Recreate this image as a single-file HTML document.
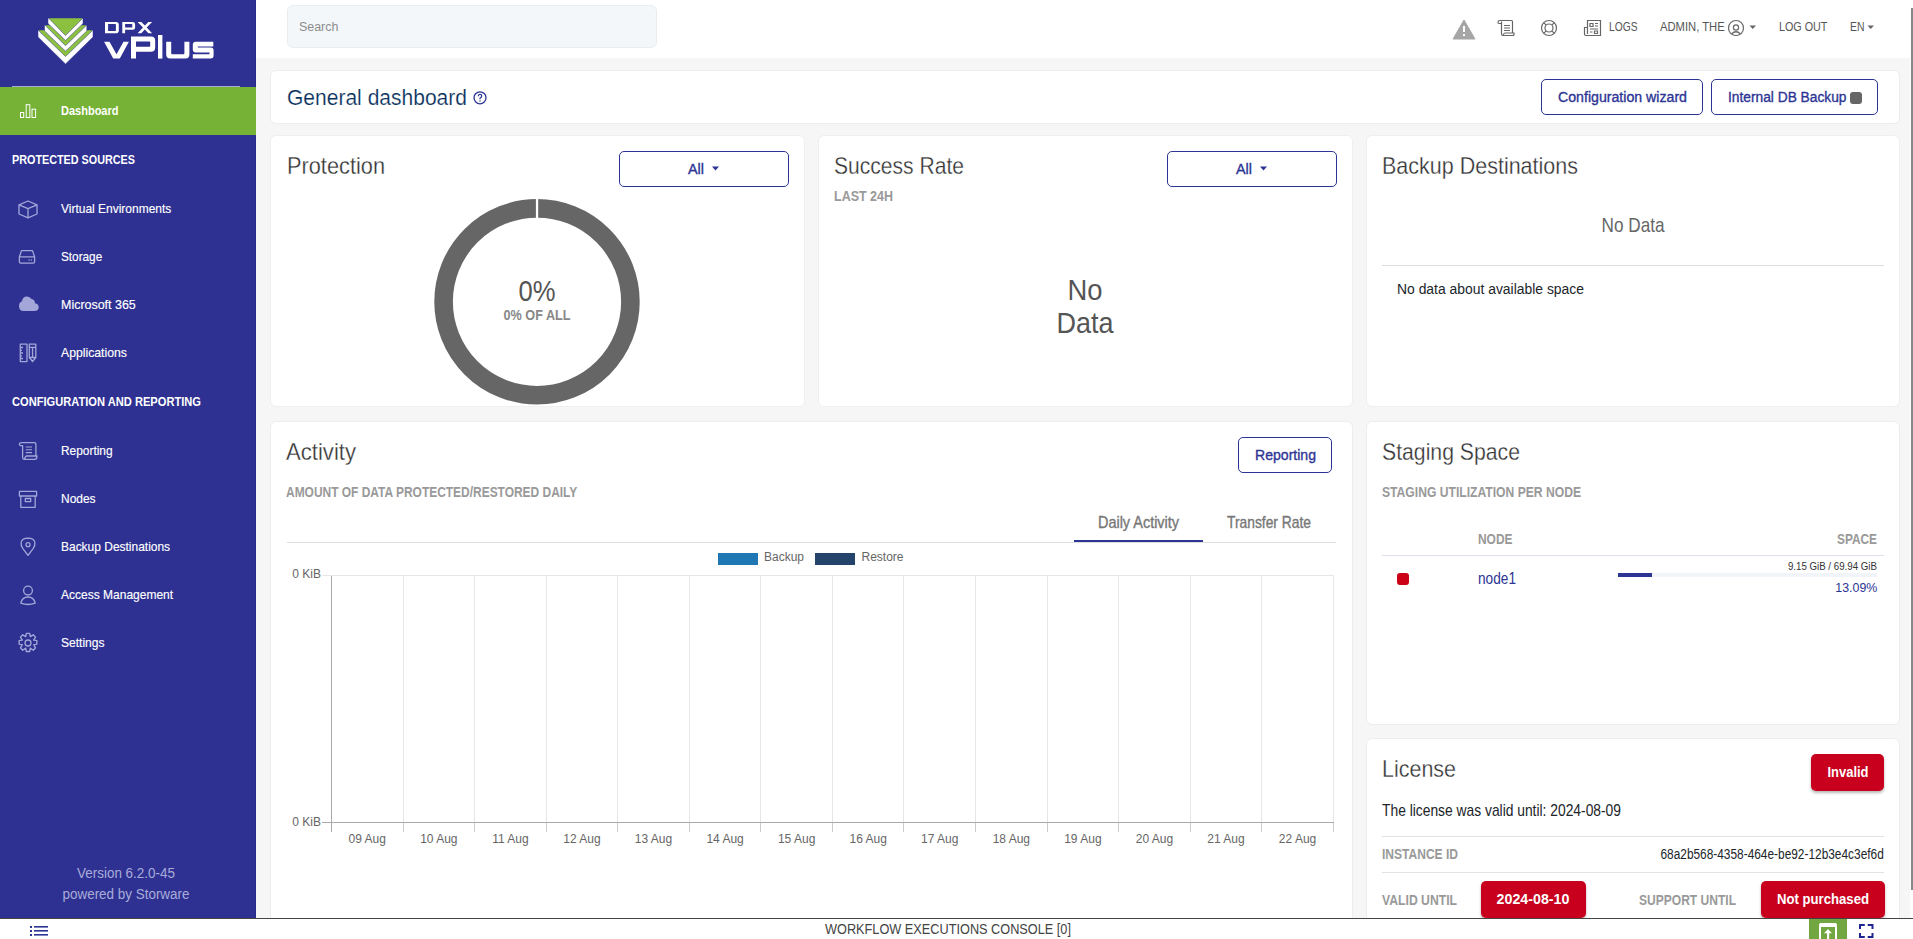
<!DOCTYPE html>
<html><head><meta charset="utf-8"><title>DPX vPlus - Dashboard</title>
<style>
html,body{margin:0;padding:0;width:1913px;height:939px;overflow:hidden;background:#f6f6f6;font-family:"Liberation Sans",sans-serif;}
.t{position:absolute;white-space:nowrap;line-height:1;}
.b{position:absolute;box-sizing:border-box;}
svg{position:absolute;overflow:visible;}
</style></head><body>
<div class=b style="left:256px;top:0;width:1657px;height:58px;background:#fff"></div>
<div class=b style="left:287px;top:5px;width:370px;height:43px;background:#f4f7fa;border:1px solid #e9edf0;border-radius:6px"></div>
<div class=t style="left:298.70px;top:20.00px;font-size:13.52px;font-weight:400;color:#8c8c8c;z-index:5;transform:scaleX(0.9200);transform-origin:left top;">Search</div>
<svg style="left:0;top:0" width="1913" height="60" viewBox="0 0 1913 60">
<path d="M1464 20 L1475 39 L1453 39 Z" fill="#a6a6a6" stroke="#a6a6a6" stroke-width="1" stroke-linejoin="round"/>
<rect x="1463" y="26" width="2" height="6" fill="#fff"/><rect x="1463" y="34" width="2" height="2" fill="#fff"/>
<g fill="none" stroke="#666" stroke-width="1.2">
<path d="M1500 20.5 H1511.5 Q1512.5 20.5 1512.5 21.5 V33 H1514 Q1514.5 35.5 1512.5 35.5 H1503 Q1501.5 35.5 1501.5 34 V23.5 H1499 Q1498 23.5 1498 22 Q1498 20.5 1500 20.5 Z M1501.5 23 V21.5 M1503 35.5 Q1504 33 1505 33 H1512.5"/>
<path d="M1504 25.5 H1510 M1504 28 H1510 M1504 30.5 H1510"/>
<circle cx="1549" cy="28" r="7.5"/><circle cx="1549" cy="28" r="4"/>
<path d="M1543.7 22.7 L1546.2 25.2 M1554.3 22.7 L1551.8 25.2 M1543.7 33.3 L1546.2 30.8 M1554.3 33.3 L1551.8 30.8"/>
<path d="M1587.5 20.5 H1600.5 V35.5 H1586 Q1584.5 35.5 1584.5 34 V27.5 H1587.5 Z M1587.5 27.5 V34"/>
<path d="M1590 23.5 H1593 V26.5 H1590 Z M1595 23.5 H1598 M1595 26 H1598 M1590 29 H1598 M1590 32 H1592.5 M1594.5 31 H1597.5 V33.5 H1594.5 Z"/>
<circle cx="1736" cy="28" r="7.5"/><circle cx="1736" cy="27.5" r="2.6"/><path d="M1731.5 34 Q1736 29.5 1740.5 34"/>
</g>
<path d="M1749.5 25.5 H1756 L1752.75 29 Z M1867.5 25.5 H1874 L1870.75 29 Z" fill="#666"/>
</svg>
<div class=t style="left:1608.50px;top:20.00px;font-size:13.08px;font-weight:400;color:#555;z-index:5;transform:scaleX(0.7842);transform-origin:left top;">LOGS</div>
<div class=t style="left:1660.30px;top:20.00px;font-size:13.08px;font-weight:400;color:#555;z-index:5;transform:scaleX(0.8589);transform-origin:left top;">ADMIN, THE</div>
<div class=t style="left:1778.60px;top:20.00px;font-size:13.08px;font-weight:400;color:#555;z-index:5;transform:scaleX(0.8223);transform-origin:left top;">LOG OUT</div>
<div class=t style="left:1849.50px;top:20.00px;font-size:13.08px;font-weight:400;color:#555;z-index:5;transform:scaleX(0.7979);transform-origin:left top;">EN</div>
<div class=b style="left:0;top:0;width:256px;height:918px;background:#2e3192"></div>
<div class=b style="left:255px;top:0;width:1px;height:918px;background:#262b8a"></div>
<div class=b style="left:0;top:87px;width:256px;height:48px;background:#76b236"></div>
<div class=b style="left:12px;top:86px;width:228px;height:1px;background:#a7a9d6"></div>
<svg style="left:0;top:0" width="256" height="80" viewBox="0 0 256 80">
<g stroke="#2e3192" stroke-width="0.5" stroke-linejoin="round">
<path d="M38 30 H93 V37 L65.5 64 L38 37 Z" fill="#fff"/>
<path d="M38 30 H93 L65.5 56.5 Z" fill="#8cc03f"/>
<path d="M44.5 25 H86.8 V31 L65.5 51.2 L44.5 31 Z" fill="#fff"/>
<path d="M44.8 25 H86.8 L65.5 45.7 Z" fill="#8cc03f"/>
<path d="M48 18 H83 V23.5 L65.5 40.4 L48 23.5 Z" fill="#fff"/>
<path d="M48.5 18 H83 L65.5 35.5 Z" fill="#8cc03f"/>
</g>
<g fill="#fff" fill-rule="evenodd">
<path d="M105 21.9 H116 Q118.8 21.9 118.8 24.7 V30.4 Q118.8 33.2 116 33.2 H105 Z M108.1 24.1 V31 H115.3 Q115.9 31 115.9 30.4 V24.7 Q115.9 24.1 115.3 24.1 Z"/>
<path d="M122.3 21.9 H132.6 Q135.1 21.9 135.1 24.4 V27.2 Q135.1 29.7 132.6 29.7 H125.1 V33.2 H122.3 Z M125.1 24.1 V27.6 H131.7 Q132.3 27.6 132.3 27 V24.7 Q132.3 24.1 131.7 24.1 Z"/>
<path d="M137.6 21.9 H141.3 L144.85 25.6 L148.4 21.9 H152.1 L146.7 27.55 L152.1 33.2 H148.4 L144.85 29.5 L141.3 33.2 H137.6 L143 27.55 Z"/>
<path d="M104.1 41.7 H109.5 L116.5 54.2 L123.5 41.7 H128.9 L119.8 58.6 H113.2 Z"/>
<path d="M131 36.6 H151 Q155.2 36.6 155.2 40.8 V47.5 Q155.2 51.7 151 51.7 H136 V58.6 H131 Z M136 41.6 V46.7 H149.5 Q150.2 46.7 150.2 46 V42.3 Q150.2 41.6 149.5 41.6 Z"/>
<path d="M158 35 H162.4 V58.6 H158 Z"/>
<path d="M166.2 41.7 H171.2 V53.2 Q171.2 54.2 172.2 54.2 H183.4 Q184.4 54.2 184.4 53.2 V41.7 H189.4 V54.6 Q189.4 58.6 185.4 58.6 H170.2 Q166.2 58.6 166.2 54.6 Z"/>
<path d="M195.8 41.7 H213.3 V46.4 H197.8 V47.6 H210.6 Q213.6 47.6 213.6 50.6 V55.6 Q213.6 58.6 210.6 58.6 H192.8 V54.2 H209.5 V52.6 H195.8 Q192.8 52.6 192.8 49.6 V44.7 Q192.8 41.7 195.8 41.7 Z"/>
</g>
</svg>
<svg style="left:0;top:0" width="256" height="700" viewBox="0 0 256 700">
<g fill="none" stroke="#fff" stroke-width="1">
<rect x="20.5" y="112.5" width="3.2" height="5"/><rect x="26.2" y="104.7" width="3.6" height="12.8"/><rect x="32" y="109.2" width="3.6" height="8.3"/>
</g>
<g fill="none" stroke="#a3a6d8" stroke-width="1.3" stroke-linejoin="round">
<path d="M28 201 L37 204.8 V214 L28 217.8 L19 214 V204.8 Z M19 204.8 L28 208.6 L37 204.8 M28 208.6 V217.8"/>
<path d="M21.5 250.6 H32.5 L34.6 256.8 V261.8 Q34.6 263.2 33.2 263.2 H20.8 Q19.4 263.2 19.4 261.8 V256.8 Z M19.4 256.8 H34.6"/>
<path d="M28.6 260 H29.6 M30.8 260 H31.8" stroke-width="1.4"/>
<path d="M20.3 344.2 H27 V361.6 H20.3 Z M20.3 347.5 H23 M20.3 350.3 H22 M20.3 353 H23 M20.3 355.8 H22 M20.3 358.5 H23"/>
<path d="M29.3 344.2 H35.8 V357.5 L32.55 361.5 L29.3 357.5 Z M29.3 347.3 H35.8 M32.55 347.3 V357.5 M29.3 357.5 H35.8"/>
<path d="M22 442.6 H34.5 Q35.9 442.6 35.9 444 V456 H37 Q37 459.4 34.8 459.4 H24.3 Q22.6 459.4 22.6 457.6 V445.6 H20.4 Q19.4 445.6 19.4 444.1 Q19.4 442.6 22 442.6 Z M24.3 459.4 Q25.5 456 26.5 456 H35.9"/>
<path d="M25.8 447 H32 M25.8 449.8 H32 M25.8 452.6 H32" stroke-width="1.1"/>
<path d="M19.4 491.4 H36.6 V496 H19.4 Z M20.8 496 V507.3 H35.2 V496 M25.3 498.5 H30.7 V501.6 H25.3 Z"/>
<path d="M28 555.4 L22.7 548.3 Q20.8 545.5 21.1 542.5 Q21.9 538.3 28 538.2 Q34.1 538.3 34.9 542.5 Q35.2 545.5 33.3 548.3 Z"/>
<circle cx="28" cy="544.7" r="2"/>
<circle cx="28" cy="590.6" r="4.4"/>
<path d="M20.8 603.2 Q22 597 28 597 Q34 597 35.2 603.2 Q28 605.8 20.8 603.2 Z"/>
<path d="M26.6 634.3 H29.4 L29.9 637 L32.4 635.4 L34.3 637.4 L32.7 639.9 L35.4 640.4 V643.2 L32.7 643.8 L34.3 646.3 L32.4 648.3 L29.9 646.6 L29.4 649.4 H26.6 L26.1 646.6 L23.6 648.3 L21.7 646.3 L23.3 643.8 L20.6 643.2 V640.4 L23.3 639.9 L21.7 637.4 L23.6 635.4 L26.1 637 Z" transform="translate(28,643) scale(1.2) translate(-28,-642.3)" stroke-width="1.1"/>
<circle cx="28" cy="643" r="3"/>
</g>
<path d="M23.5 311 H34.5 Q38.7 311 38.7 307.3 Q38.7 303.7 35 303.3 Q34.8 299.3 31.5 299 Q30 296.5 27 296.5 Q22.5 296.5 22 301.3 Q19 302.3 19 306 Q19 311 23.5 311 Z" fill="#a3a6d8"/>
</svg>
<div class=t style="left:61.10px;top:104.00px;font-size:13.23px;font-weight:700;color:#fff;z-index:5;transform:scaleX(0.8328);transform-origin:left top;">Dashboard</div>
<div class=t style="left:12.00px;top:153.00px;font-size:13.37px;font-weight:700;color:#fff;z-index:5;transform:scaleX(0.8083);transform-origin:left top;">PROTECTED SOURCES</div>
<div class=t style="left:12.00px;top:395.00px;font-size:13.37px;font-weight:700;color:#fff;z-index:5;transform:scaleX(0.8322);transform-origin:left top;">CONFIGURATION AND REPORTING</div>
<div class=t style="left:61.00px;top:202.00px;font-size:13.37px;font-weight:400;color:#fff;z-index:5;transform:scaleX(0.8966);transform-origin:left top;-webkit-text-stroke:0.15px #fff;">Virtual Environments</div>
<div class=t style="left:61.00px;top:250.00px;font-size:13.37px;font-weight:400;color:#fff;z-index:5;transform:scaleX(0.8804);transform-origin:left top;-webkit-text-stroke:0.15px #fff;">Storage</div>
<div class=t style="left:61.00px;top:298.00px;font-size:13.37px;font-weight:400;color:#fff;z-index:5;transform:scaleX(0.9326);transform-origin:left top;-webkit-text-stroke:0.15px #fff;">Microsoft 365</div>
<div class=t style="left:61.00px;top:346.00px;font-size:13.37px;font-weight:400;color:#fff;z-index:5;transform:scaleX(0.9147);transform-origin:left top;-webkit-text-stroke:0.15px #fff;">Applications</div>
<div class=t style="left:61.00px;top:444.00px;font-size:13.37px;font-weight:400;color:#fff;z-index:5;transform:scaleX(0.8906);transform-origin:left top;-webkit-text-stroke:0.15px #fff;">Reporting</div>
<div class=t style="left:61.00px;top:492.00px;font-size:13.37px;font-weight:400;color:#fff;z-index:5;transform:scaleX(0.8958);transform-origin:left top;-webkit-text-stroke:0.15px #fff;">Nodes</div>
<div class=t style="left:61.00px;top:540.00px;font-size:13.37px;font-weight:400;color:#fff;z-index:5;transform:scaleX(0.8958);transform-origin:left top;-webkit-text-stroke:0.15px #fff;">Backup Destinations</div>
<div class=t style="left:61.00px;top:588.00px;font-size:13.37px;font-weight:400;color:#fff;z-index:5;transform:scaleX(0.8986);transform-origin:left top;-webkit-text-stroke:0.15px #fff;">Access Management</div>
<div class=t style="left:61.00px;top:636.00px;font-size:13.37px;font-weight:400;color:#fff;z-index:5;transform:scaleX(0.9010);transform-origin:left top;-webkit-text-stroke:0.15px #fff;">Settings</div>
<div class=t style="left:126.00px;width:0;display:flex;justify-content:center;top:866.00px;font-size:14.53px;font-weight:400;color:#a9acd9;z-index:5;transform:scaleX(0.9270);transform-origin:center top;">Version 6.2.0-45</div>
<div class=t style="left:126.00px;width:0;display:flex;justify-content:center;top:887.00px;font-size:14.53px;font-weight:400;color:#a9acd9;z-index:5;transform:scaleX(0.9258);transform-origin:center top;">powered by Storware</div>
<div class=b style="left:270px;top:70px;width:1630px;height:54px;background:#fff;border:1px solid #ededed;border-radius:6px"></div>
<div class=t style="left:287.00px;top:86.00px;font-size:22.97px;font-weight:400;color:#08305c;z-index:5;transform:scaleX(0.9153);transform-origin:left top;-webkit-text-stroke:0.2px #fff;">General dashboard</div>
<svg style="left:0;top:0" width="500" height="120" viewBox="0 0 500 120"><circle cx="480" cy="97.8" r="6" fill="none" stroke="#2c3494" stroke-width="1.3"/>
<path d="M478.2 96.3 Q478.2 94.4 480 94.4 Q481.8 94.4 481.8 96.1 Q481.8 97.3 480 98.2 V99.3" fill="none" stroke="#2c3494" stroke-width="1.2"/><rect x="479.4" y="100.4" width="1.2" height="1.2" fill="#2c3494"/></svg>
<div class=b style="left:1541px;top:79px;width:162px;height:36px;border:1px solid #2c3494;border-radius:5px"></div>
<div class=t style="left:1557.90px;top:90.00px;font-size:14.83px;font-weight:400;color:#2c3494;z-index:5;transform:scaleX(0.9543);transform-origin:left top;-webkit-text-stroke:0.35px currentColor;">Configuration wizard</div>
<div class=b style="left:1711px;top:79px;width:167px;height:36px;border:1px solid #2c3494;border-radius:5px"></div>
<div class=t style="left:1727.60px;top:90.00px;font-size:14.83px;font-weight:400;color:#2c3494;z-index:5;transform:scaleX(0.9275);transform-origin:left top;-webkit-text-stroke:0.35px currentColor;">Internal DB Backup</div>
<div class=b style="left:1850px;top:92px;width:12px;height:12px;background:#666;border-radius:3px"></div>
<div class=b style="left:270px;top:135px;width:535px;height:272px;background:#fff;border:1px solid #efefef;border-radius:6px"></div>
<div class=b style="left:818px;top:135px;width:535px;height:272px;background:#fff;border:1px solid #efefef;border-radius:6px"></div>
<div class=b style="left:1366px;top:135px;width:534px;height:272px;background:#fff;border:1px solid #efefef;border-radius:6px"></div>
<div class=t style="left:286.70px;top:154.00px;font-size:24.71px;font-weight:400;color:#333;z-index:5;transform:scaleX(0.8810);transform-origin:left top;-webkit-text-stroke:0.3px #fff;">Protection</div>
<div class=t style="left:834.00px;top:154.00px;font-size:24.71px;font-weight:400;color:#333;z-index:5;transform:scaleX(0.8530);transform-origin:left top;-webkit-text-stroke:0.3px #fff;">Success Rate</div>
<div class=t style="left:1382.00px;top:154.00px;font-size:24.71px;font-weight:400;color:#333;z-index:5;transform:scaleX(0.8703);transform-origin:left top;-webkit-text-stroke:0.3px #fff;">Backup Destinations</div>
<div class=b style="left:619px;top:151px;width:170px;height:36px;border:1px solid #2c3494;border-radius:5px"></div>
<div class=b style="left:1167px;top:151px;width:170px;height:36px;border:1px solid #2c3494;border-radius:5px"></div>
<div class=t style="left:688.00px;top:162.00px;font-size:14.53px;font-weight:400;color:#2c3494;z-index:5;transform:scaleX(0.9913);transform-origin:left top;-webkit-text-stroke:0.35px currentColor;">All</div>
<div class=t style="left:1236.00px;top:162.00px;font-size:14.53px;font-weight:400;color:#2c3494;z-index:5;transform:scaleX(0.9913);transform-origin:left top;-webkit-text-stroke:0.35px currentColor;">All</div>
<svg style="left:0;top:0" width="1400" height="200" viewBox="0 0 1400 200"><path d="M712 166.5 H719 L715.5 170.5 Z M1260 166.5 H1267 L1263.5 170.5 Z" fill="#2c3494"/></svg>
<svg style="left:0;top:0" width="700" height="420" viewBox="0 0 700 420"><circle cx="537" cy="301.8" r="93.4" fill="none" stroke="#666" stroke-width="18.6"/><rect x="535.9" y="196" width="2.3" height="24" fill="#fff"/></svg>
<div class=t style="left:537.00px;width:0;display:flex;justify-content:center;top:277.00px;font-size:29.07px;font-weight:400;color:#555;z-index:5;transform:scaleX(0.8806);transform-origin:center top;">0%</div>
<div class=t style="left:537.00px;width:0;display:flex;justify-content:center;top:308.00px;font-size:14.83px;font-weight:700;color:#888;z-index:5;transform:scaleX(0.8530);transform-origin:center top;">0% OF ALL</div>
<div class=t style="left:834.00px;top:190.00px;font-size:13.81px;font-weight:700;color:#999;z-index:5;transform:scaleX(0.9053);transform-origin:left top;">LAST 24H</div>
<div class=t style="left:1085.00px;width:0;display:flex;justify-content:center;top:275.00px;font-size:29.36px;font-weight:400;color:#555;z-index:5;transform:scaleX(0.9326);transform-origin:center top;">No</div>
<div class=t style="left:1085.00px;width:0;display:flex;justify-content:center;top:308.00px;font-size:29.36px;font-weight:400;color:#555;z-index:5;transform:scaleX(0.9189);transform-origin:center top;">Data</div>
<div class=t style="left:1633.00px;width:0;display:flex;justify-content:center;top:215.00px;font-size:20.06px;font-weight:400;color:#666;z-index:5;transform:scaleX(0.8566);transform-origin:center top;">No Data</div>
<div class=b style="left:1382px;top:265px;width:502px;height:1px;background:#dcdcdc"></div>
<div class=t style="left:1396.80px;top:282.00px;font-size:14.83px;font-weight:400;color:#212529;z-index:5;transform:scaleX(0.9373);transform-origin:left top;">No data about available space</div>
<div class=b style="left:270px;top:421px;width:1083px;height:520px;background:#fff;border:1px solid #ededed;border-radius:6px"></div>
<div class=b style="left:1366px;top:421px;width:534px;height:304px;background:#fff;border:1px solid #ededed;border-radius:6px"></div>
<div class=b style="left:1366px;top:738px;width:534px;height:250px;background:#fff;border:1px solid #ededed;border-radius:6px"></div>
<div class=t style="left:286.30px;top:440.00px;font-size:24.71px;font-weight:400;color:#333;z-index:5;transform:scaleX(0.8946);transform-origin:left top;-webkit-text-stroke:0.3px #fff;">Activity</div>
<div class=t style="left:1382.00px;top:440.00px;font-size:24.71px;font-weight:400;color:#333;z-index:5;transform:scaleX(0.8587);transform-origin:left top;-webkit-text-stroke:0.3px #fff;">Staging Space</div>
<div class=t style="left:1382.00px;top:758.00px;font-size:23.26px;font-weight:400;color:#333;z-index:5;transform:scaleX(0.9234);transform-origin:left top;-webkit-text-stroke:0.3px #fff;">License</div>
<div class=b style="left:1238px;top:437px;width:94px;height:36px;border:1px solid #2c3494;border-radius:5px"></div>
<div class=t style="left:1254.50px;top:447.00px;font-size:15.26px;font-weight:400;color:#2c3494;z-index:5;transform:scaleX(0.9225);transform-origin:left top;-webkit-text-stroke:0.35px currentColor;">Reporting</div>
<div class=t style="left:286.30px;top:485.00px;font-size:14.24px;font-weight:700;color:#999;z-index:5;transform:scaleX(0.8397);transform-origin:left top;">AMOUNT OF DATA PROTECTED/RESTORED DAILY</div>
<div class=b style="left:287px;top:542px;width:1049px;height:1px;background:#dedede"></div>
<div class=b style="left:1074px;top:539.5px;width:129px;height:2.5px;background:#2c3494"></div>
<div class=t style="left:1098.00px;top:515.00px;font-size:15.70px;font-weight:400;color:#777;z-index:5;transform:scaleX(0.9200);transform-origin:left top;-webkit-text-stroke:0.35px currentColor;">Daily Activity</div>
<div class=t style="left:1227.00px;top:515.00px;font-size:15.70px;font-weight:400;color:#777;z-index:5;transform:scaleX(0.8812);transform-origin:left top;-webkit-text-stroke:0.35px currentColor;">Transfer Rate</div>
<svg style="left:0;top:0" width="1400" height="900" viewBox="0 0 1400 900" shape-rendering="crispEdges"><g fill="none"><path d="M331.50 575.5 V822.5" stroke="#e6e6e6"/><path d="M331.50 822.5 V832" stroke="#ccc"/><path d="M403.06 575.5 V822.5" stroke="#e6e6e6"/><path d="M403.06 822.5 V832" stroke="#ccc"/><path d="M474.62 575.5 V822.5" stroke="#e6e6e6"/><path d="M474.62 822.5 V832" stroke="#ccc"/><path d="M546.18 575.5 V822.5" stroke="#e6e6e6"/><path d="M546.18 822.5 V832" stroke="#ccc"/><path d="M617.74 575.5 V822.5" stroke="#e6e6e6"/><path d="M617.74 822.5 V832" stroke="#ccc"/><path d="M689.30 575.5 V822.5" stroke="#e6e6e6"/><path d="M689.30 822.5 V832" stroke="#ccc"/><path d="M760.86 575.5 V822.5" stroke="#e6e6e6"/><path d="M760.86 822.5 V832" stroke="#ccc"/><path d="M832.42 575.5 V822.5" stroke="#e6e6e6"/><path d="M832.42 822.5 V832" stroke="#ccc"/><path d="M903.98 575.5 V822.5" stroke="#e6e6e6"/><path d="M903.98 822.5 V832" stroke="#ccc"/><path d="M975.54 575.5 V822.5" stroke="#e6e6e6"/><path d="M975.54 822.5 V832" stroke="#ccc"/><path d="M1047.10 575.5 V822.5" stroke="#e6e6e6"/><path d="M1047.10 822.5 V832" stroke="#ccc"/><path d="M1118.66 575.5 V822.5" stroke="#e6e6e6"/><path d="M1118.66 822.5 V832" stroke="#ccc"/><path d="M1190.22 575.5 V822.5" stroke="#e6e6e6"/><path d="M1190.22 822.5 V832" stroke="#ccc"/><path d="M1261.78 575.5 V822.5" stroke="#e6e6e6"/><path d="M1261.78 822.5 V832" stroke="#ccc"/><path d="M1333.34 575.5 V822.5" stroke="#e6e6e6"/><path d="M1333.34 822.5 V832" stroke="#ccc"/><path d="M331.5 575.5 H1333.5" stroke="#e6e6e6"/><path d="M322 575.5 H331.5" stroke="#e6e6e6"/><path d="M322 822.5 H1333.5" stroke="#aaa"/><path d="M331.5 575.5 V832" stroke="#aaa"/></g><rect x="718" y="553" width="40" height="12" fill="#1f77b4"/><rect x="815" y="553" width="40" height="12" fill="#24446b"/></svg>
<div class="lab" style="position:absolute;left:764px;top:551px;font-size:12px;line-height:12px;color:#666;font-family:'Liberation Sans'">Backup</div>
<div class="lab" style="position:absolute;left:861.5px;top:551px;font-size:12px;line-height:12px;color:#666;font-family:'Liberation Sans'">Restore</div>
<div class="lab" style="position:absolute;right:1592px;top:567.5px;font-size:12px;line-height:12px;color:#666;font-family:'Liberation Sans'">0 KiB</div>
<div class="lab" style="position:absolute;right:1592px;top:815.5px;font-size:12px;line-height:12px;color:#666;font-family:'Liberation Sans'">0 KiB</div>
<div class="lab" style="position:absolute;left:317.28px;width:100px;text-align:center;top:832.5px;font-size:12px;line-height:12px;color:#666;font-family:'Liberation Sans'">09 Aug</div>
<div class="lab" style="position:absolute;left:388.84px;width:100px;text-align:center;top:832.5px;font-size:12px;line-height:12px;color:#666;font-family:'Liberation Sans'">10 Aug</div>
<div class="lab" style="position:absolute;left:460.40px;width:100px;text-align:center;top:832.5px;font-size:12px;line-height:12px;color:#666;font-family:'Liberation Sans'">11 Aug</div>
<div class="lab" style="position:absolute;left:531.96px;width:100px;text-align:center;top:832.5px;font-size:12px;line-height:12px;color:#666;font-family:'Liberation Sans'">12 Aug</div>
<div class="lab" style="position:absolute;left:603.52px;width:100px;text-align:center;top:832.5px;font-size:12px;line-height:12px;color:#666;font-family:'Liberation Sans'">13 Aug</div>
<div class="lab" style="position:absolute;left:675.08px;width:100px;text-align:center;top:832.5px;font-size:12px;line-height:12px;color:#666;font-family:'Liberation Sans'">14 Aug</div>
<div class="lab" style="position:absolute;left:746.64px;width:100px;text-align:center;top:832.5px;font-size:12px;line-height:12px;color:#666;font-family:'Liberation Sans'">15 Aug</div>
<div class="lab" style="position:absolute;left:818.20px;width:100px;text-align:center;top:832.5px;font-size:12px;line-height:12px;color:#666;font-family:'Liberation Sans'">16 Aug</div>
<div class="lab" style="position:absolute;left:889.76px;width:100px;text-align:center;top:832.5px;font-size:12px;line-height:12px;color:#666;font-family:'Liberation Sans'">17 Aug</div>
<div class="lab" style="position:absolute;left:961.32px;width:100px;text-align:center;top:832.5px;font-size:12px;line-height:12px;color:#666;font-family:'Liberation Sans'">18 Aug</div>
<div class="lab" style="position:absolute;left:1032.88px;width:100px;text-align:center;top:832.5px;font-size:12px;line-height:12px;color:#666;font-family:'Liberation Sans'">19 Aug</div>
<div class="lab" style="position:absolute;left:1104.44px;width:100px;text-align:center;top:832.5px;font-size:12px;line-height:12px;color:#666;font-family:'Liberation Sans'">20 Aug</div>
<div class="lab" style="position:absolute;left:1176.00px;width:100px;text-align:center;top:832.5px;font-size:12px;line-height:12px;color:#666;font-family:'Liberation Sans'">21 Aug</div>
<div class="lab" style="position:absolute;left:1247.56px;width:100px;text-align:center;top:832.5px;font-size:12px;line-height:12px;color:#666;font-family:'Liberation Sans'">22 Aug</div>
<div class=t style="left:1382.00px;top:485.00px;font-size:14.83px;font-weight:700;color:#999;z-index:5;transform:scaleX(0.8179);transform-origin:left top;">STAGING UTILIZATION PER NODE</div>
<div class=t style="left:1478.00px;top:532.00px;font-size:14.83px;font-weight:700;color:#999;z-index:5;transform:scaleX(0.8053);transform-origin:left top;">NODE</div>
<div class=t style="right:36.00px;top:532.00px;font-size:14.83px;font-weight:700;color:#999;z-index:5;transform:scaleX(0.8000);transform-origin:right top;">SPACE</div>
<div class=b style="left:1382px;top:555px;width:502px;height:1px;background:#dde0ee"></div>
<div class=b style="left:1397px;top:572.5px;width:12px;height:12px;background:#cc0016;border-radius:3px"></div>
<div class=t style="left:1478.00px;top:571.00px;font-size:15.99px;font-weight:400;color:#2c3494;z-index:5;transform:scaleX(0.8548);transform-origin:left top;">node1</div>
<div class=b style="left:1617.5px;top:573px;width:259.5px;height:4px;background:#f1f4f8"></div>
<div class=b style="left:1617.5px;top:573px;width:34.5px;height:4px;background:#2c3494"></div>
<div class=t style="right:36.00px;top:561.00px;font-size:11.34px;font-weight:400;color:#333;z-index:5;transform:scaleX(0.8565);transform-origin:right top;">9.15 GiB / 69.94 GiB</div>
<div class=t style="right:36.00px;top:581.00px;font-size:13.66px;font-weight:400;color:#2c3494;z-index:5;transform:scaleX(0.9066);transform-origin:right top;">13.09%</div>
<div class=b style="left:1811px;top:754px;width:73px;height:37px;background:#c8001e;border-radius:5px;box-shadow:0 2px 3px rgba(0,0,0,.28)"></div>
<div class=t style="left:1847.50px;width:0;display:flex;justify-content:center;top:765.00px;font-size:14.53px;font-weight:700;color:#fff;z-index:5;transform:scaleX(0.8916);transform-origin:center top;">Invalid</div>
<div class=t style="left:1382.00px;top:803.00px;font-size:15.99px;font-weight:400;color:#212529;z-index:5;transform:scaleX(0.8649);transform-origin:left top;">The license was valid until: 2024-08-09</div>
<div class=b style="left:1382px;top:836px;width:502px;height:1px;background:#e3e3e3"></div>
<div class=t style="left:1382.00px;top:847.00px;font-size:14.24px;font-weight:700;color:#999;z-index:5;transform:scaleX(0.8455);transform-origin:left top;">INSTANCE ID</div>
<div class=t style="right:29.00px;top:847.00px;font-size:14.68px;font-weight:400;color:#212529;z-index:5;transform:scaleX(0.8098);transform-origin:right top;">68a2b568-4358-464e-be92-12b3e4c3ef6d</div>
<div class=b style="left:1382px;top:872px;width:502px;height:1px;background:#e3e3e3"></div>
<div class=t style="left:1382.00px;top:893.00px;font-size:14.24px;font-weight:700;color:#999;z-index:5;transform:scaleX(0.8570);transform-origin:left top;">VALID UNTIL</div>
<div class=t style="left:1639.00px;top:893.00px;font-size:14.24px;font-weight:700;color:#999;z-index:5;transform:scaleX(0.8459);transform-origin:left top;">SUPPORT UNTIL</div>
<div class=b style="left:1481px;top:881px;width:104.5px;height:36.5px;background:#c8001e;border-radius:5px;box-shadow:0 2px 3px rgba(0,0,0,.28)"></div>
<div class=t style="left:1533.30px;width:0;display:flex;justify-content:center;top:892.00px;font-size:14.53px;font-weight:700;color:#fff;z-index:5;transform:scaleX(0.9830);transform-origin:center top;">2024-08-10</div>
<div class=b style="left:1761px;top:881px;width:123.5px;height:36.5px;background:#c8001e;border-radius:5px;box-shadow:0 2px 3px rgba(0,0,0,.28)"></div>
<div class=t style="left:1822.80px;width:0;display:flex;justify-content:center;top:892.00px;font-size:14.53px;font-weight:700;color:#fff;z-index:5;transform:scaleX(0.9053);transform-origin:center top;">Not purchased</div>
<div class=b style="left:1910px;top:0;width:3px;height:918px;background:#fdfdfd"></div>
<div class=b style="left:1911px;top:8px;width:2px;height:882px;background:#888"></div>
<div class=b style="left:0;top:918px;width:1913px;height:21px;background:#fff;border-top:1px solid #444;z-index:20"></div>
<div class=t style="left:948.00px;width:0;display:flex;justify-content:center;top:922.00px;font-size:14.24px;font-weight:400;color:#444;z-index:21;transform:scaleX(0.8937);transform-origin:center top;">WORKFLOW EXECUTIONS CONSOLE [0]</div>
<svg style="left:0;top:0;z-index:22" width="1913" height="939" viewBox="0 0 1913 939">
<g fill="#2c3494"><rect x="30" y="926" width="2" height="2"/><rect x="30" y="930" width="2" height="2"/><rect x="30" y="934" width="2" height="2"/>
<rect x="34" y="926" width="14" height="1.6"/><rect x="34" y="930" width="14" height="1.6"/><rect x="34" y="934" width="14" height="1.6"/></g>
<rect x="1809" y="919" width="38" height="20" fill="#72a640"/>
<path d="M1820 939 V925 Q1820 924 1821 924 H1835 Q1836 924 1836 925 V939" fill="none" stroke="#fff" stroke-width="2"/><rect x="1820" y="923" width="16" height="4" rx="1" fill="#fff"/>
<path d="M1824 933.3 L1828 929 L1832 933.3 Z" fill="#fff"/><rect x="1827" y="932" width="2.2" height="7" fill="#fff"/>
<path d="M1860 929 V925 H1864.8 M1867.7 925 H1872.5 V929 M1872.5 933 V937 H1867.7 M1864.8 937 H1860 V933" fill="none" stroke="#1f2590" stroke-width="2"/>
</svg>
</body></html>
